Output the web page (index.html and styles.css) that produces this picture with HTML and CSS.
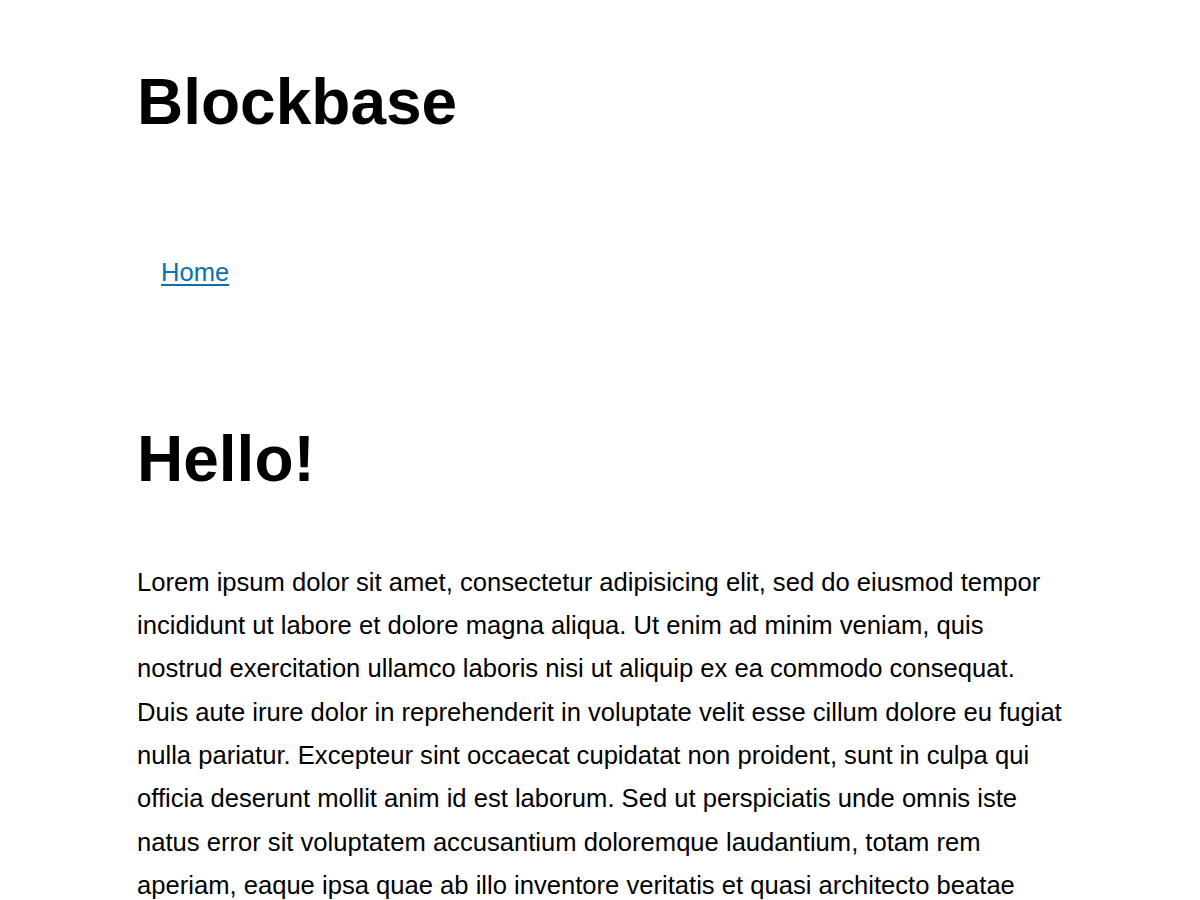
FILE: index.html
```html
<!DOCTYPE html>
<html lang="en">
<head>
<meta charset="utf-8">
<title>Blockbase</title>
<link rel="stylesheet" href="styles.css">
</head>
<body>
<div class="page">
  <header class="site-header">
    <h1 class="site-title">Blockbase</h1>
    <nav class="site-nav">
      <a class="nav-link" href="#">Home</a>
    </nav>
  </header>
  <main class="content">
    <h2 class="post-title">Hello!</h2>
    <p class="post-text">Lorem ipsum dolor sit amet, consectetur adipisicing elit, sed do eiusmod tempor incididunt ut labore et dolore magna aliqua. Ut enim ad minim veniam, quis nostrud exercitation ullamco laboris nisi ut aliquip ex ea commodo consequat. Duis aute irure dolor in reprehenderit in voluptate velit esse cillum dolore eu fugiat nulla pariatur. Excepteur sint occaecat cupidatat non proident, sunt in culpa qui officia deserunt mollit anim id est laborum. Sed ut perspiciatis unde omnis iste natus error sit voluptatem accusantium doloremque laudantium, totam rem aperiam, eaque ipsa quae ab illo inventore veritatis et quasi architecto beatae vitae dicta sunt explicabo. Nemo enim ipsam voluptatem quia voluptas sit aspernatur aut odit aut fugit, sed quia consequuntur magni dolores eos qui ratione voluptatem sequi nesciunt.</p>
  </main>
</div>
</body>
</html>
```
FILE: styles.css
```css
html, body {
  margin: 0;
  padding: 0;
  background: #ffffff;
}
body {
  font-family: "Liberation Sans", Helvetica, Arial, sans-serif;
  color: #000000;
}
.page {
  padding: 67px 137px 0 137px;
}
.site-header {
  display: flex;
  flex-direction: column;
}
.site-title {
  margin: 0;
  font-size: 64px;
  line-height: 1.1;
  font-weight: 700;
}
.site-nav {
  margin-top: 119px;
  padding-left: 24px;
  font-size: 25.6px;
  line-height: 33px;
}
.nav-link {
  color: #0a6fae;
  text-decoration: underline;
  text-underline-offset: 3px;
}
.content {
  margin-top: 135px;
}
.post-title {
  margin: 0;
  font-size: 64px;
  line-height: 1.1;
  font-weight: 700;
}
.post-text {
  margin: 66px 0 0 0;
  font-size: 25.6px;
  line-height: 43.3px;
}
```
